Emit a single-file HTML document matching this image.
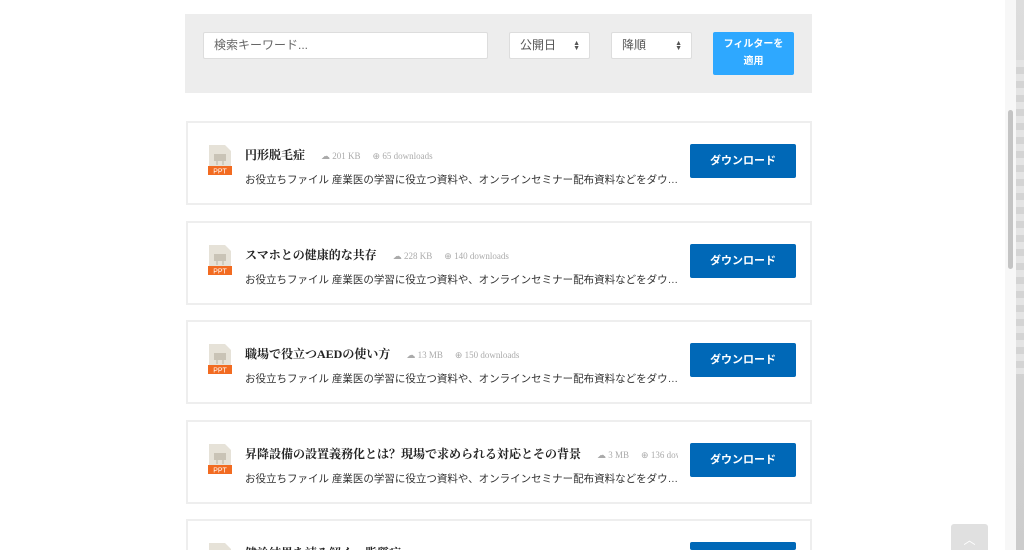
<!DOCTYPE html>
<html style="width:1024px;height:550px;overflow:hidden"><head><meta charset="utf-8"><style>
*{box-sizing:border-box;margin:0;padding:0}
body{width:1024px;height:550px;overflow:hidden;background:#fff;font-family:"Liberation Sans","Noto Sans CJK JP",sans-serif;position:relative}
.filter{position:absolute;left:185px;top:14px;width:627px;height:79px;background:#ededed}
.inp{position:absolute;background:#fff;border:1px solid #ddd;border-radius:2px;font-size:12px;color:#555;padding-left:10px;line-height:25px;height:27px}
.arr{position:absolute;right:9px;top:8px;font-size:7px;line-height:5px;color:#555}
.apply{position:absolute;left:713px;top:32px;width:81px;height:43px;background:#2ea8ff;border-radius:2px;color:#fff;font-size:10px;font-weight:bold;text-align:center;line-height:17px;padding-top:4px}
.card{position:absolute;left:186px;width:626px;height:84px;border:2px solid #eee;background:#fff;overflow:hidden}
.icon{position:absolute;left:20px;top:22px;width:24px;height:31px}
.title{position:absolute;left:57px;top:23px;font-family:"Liberation Serif","Noto Serif CJK SC",serif;font-size:12px;font-weight:bold;color:#222;white-space:nowrap}
.meta{font-family:"Liberation Serif",serif;font-weight:normal;font-size:9px;color:#aaa;margin-left:16px}
.desc{position:absolute;left:57px;top:49px;font-size:10.5px;color:#333;white-space:nowrap}
.btn{position:absolute;left:502px;top:21px;width:106px;height:34px;background:#0068b7;border-radius:2px;color:#fff;font-size:11px;font-weight:bold;text-align:center;line-height:34px}
.clip{position:absolute;left:57px;top:22px;width:433px;height:20px;overflow:hidden}
.clip .title{left:0;top:1px}
</style></head><body>
<div class="filter"></div>
<div class="inp" style="left:203px;top:32px;width:285px;color:#666">検索キーワード...</div>
<div class="inp" style="left:509px;top:32px;width:81px">公開日<div class="arr">▲<br>▼</div></div>
<div class="inp" style="left:611px;top:32px;width:81px">降順<div class="arr">▲<br>▼</div></div>
<div class="apply">フィルターを<br>適用</div>

<div class="card" style="top:121px">
<svg class="icon" viewBox="0 0 24 31"><path d="M1 0h16l6 6v18H1z" fill="#e6e2d8"/><rect x="6" y="9" width="12" height="7" fill="#c9c3b6"/><path d="M9 16v4M15 16v4" stroke="#c9c3b6" stroke-width="1.5"/><rect x="0" y="21" width="24" height="9" fill="#f26b21"/><text x="12" y="28.5" font-size="7" fill="#fff" text-anchor="middle" font-family="Liberation Sans">PPT</text></svg>
<div class="clip"><div class="title">円形脱毛症<span class="meta">☁ 201 KB</span><span class="meta" style="margin-left:12px">⊕ 65 downloads</span></div></div>
<div class="desc">お役立ちファイル 産業医の学習に役立つ資料や、オンラインセミナー配布資料などをダウ…</div>
<div class="btn">ダウンロード</div></div>

<div class="card" style="top:221px">
<svg class="icon" viewBox="0 0 24 31"><path d="M1 0h16l6 6v18H1z" fill="#e6e2d8"/><rect x="6" y="9" width="12" height="7" fill="#c9c3b6"/><path d="M9 16v4M15 16v4" stroke="#c9c3b6" stroke-width="1.5"/><rect x="0" y="21" width="24" height="9" fill="#f26b21"/><text x="12" y="28.5" font-size="7" fill="#fff" text-anchor="middle" font-family="Liberation Sans">PPT</text></svg>
<div class="clip"><div class="title">スマホとの健康的な共存<span class="meta">☁ 228 KB</span><span class="meta" style="margin-left:12px">⊕ 140 downloads</span></div></div>
<div class="desc">お役立ちファイル 産業医の学習に役立つ資料や、オンラインセミナー配布資料などをダウ…</div>
<div class="btn">ダウンロード</div></div>

<div class="card" style="top:320px">
<svg class="icon" viewBox="0 0 24 31"><path d="M1 0h16l6 6v18H1z" fill="#e6e2d8"/><rect x="6" y="9" width="12" height="7" fill="#c9c3b6"/><path d="M9 16v4M15 16v4" stroke="#c9c3b6" stroke-width="1.5"/><rect x="0" y="21" width="24" height="9" fill="#f26b21"/><text x="12" y="28.5" font-size="7" fill="#fff" text-anchor="middle" font-family="Liberation Sans">PPT</text></svg>
<div class="clip"><div class="title">職場で役立つAEDの使い方<span class="meta">☁ 13 MB</span><span class="meta" style="margin-left:12px">⊕ 150 downloads</span></div></div>
<div class="desc">お役立ちファイル 産業医の学習に役立つ資料や、オンラインセミナー配布資料などをダウ…</div>
<div class="btn">ダウンロード</div></div>

<div class="card" style="top:420px">
<svg class="icon" viewBox="0 0 24 31"><path d="M1 0h16l6 6v18H1z" fill="#e6e2d8"/><rect x="6" y="9" width="12" height="7" fill="#c9c3b6"/><path d="M9 16v4M15 16v4" stroke="#c9c3b6" stroke-width="1.5"/><rect x="0" y="21" width="24" height="9" fill="#f26b21"/><text x="12" y="28.5" font-size="7" fill="#fff" text-anchor="middle" font-family="Liberation Sans">PPT</text></svg>
<div class="clip"><div class="title">昇降設備の設置義務化とは？現場で求められる対応とその背景<span class="meta">☁ 3 MB</span><span class="meta" style="margin-left:12px">⊕ 136 downloads</span></div></div>
<div class="desc">お役立ちファイル 産業医の学習に役立つ資料や、オンラインセミナー配布資料などをダウ…</div>
<div class="btn">ダウンロード</div></div>

<div class="card" style="top:519px;height:31px;border-bottom:none">
<svg class="icon" viewBox="0 0 24 31"><path d="M1 0h16l6 6v18H1z" fill="#e6e2d8"/></svg>
<div class="clip" style="height:9px"><div class="title">健診結果を読み解く　脂質症</div></div>
<div class="btn" style="height:8px"></div></div>

<div style="position:absolute;left:951px;top:524px;width:37px;height:26px;background:#e0e0e0;border-radius:3px 3px 0 0;color:#fff;text-align:center;font-size:12px;line-height:32px;overflow:hidden">︿</div>
<div style="position:absolute;left:1005px;top:0;width:11px;height:550px;background:#f7f7f7"></div>
<div style="position:absolute;left:1008px;top:110px;width:5px;height:159px;background:#c4c4c4;border-radius:3px"></div>
<div style="position:absolute;left:1016px;top:0;width:8px;height:550px;background:linear-gradient(#ddd,#ccc)"></div>
<div style="position:absolute;left:1016px;top:60px;width:8px;height:314px;background:repeating-linear-gradient(#e4e4e4 0 7px,#d4d4d4 7px 14px)"></div>
</body></html>
